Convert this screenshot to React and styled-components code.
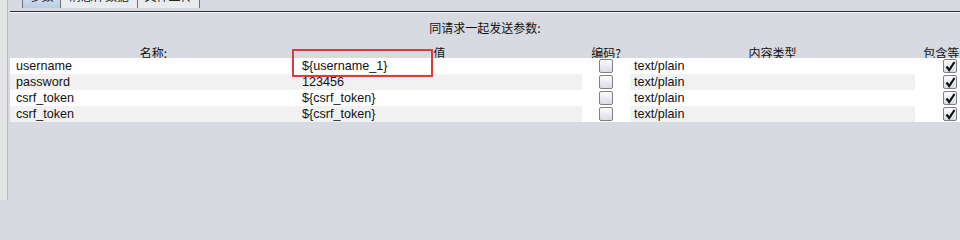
import React from 'react';
import styled, { createGlobalStyle } from 'styled-components';

const GlobalStyle = createGlobalStyle`
  html, body {
    margin: 0;
    padding: 0;
    background: #d7dae1;
  }
  body {
    font-family: "Liberation Sans", Arial, "Noto Sans CJK SC", sans-serif;
  }
`;

const Page = styled.div`
  position: relative;
  display: flex;
  width: 960px;
  height: 200px;
  overflow: hidden;
  background: #d7dae1;
`;

const SideStrip = styled.div`
  width: 7px;
  flex: none;
  background: #e2e3e5;
  border-right: 1px solid #b9bbbf;
  margin-right: 2px;
`;

const Main = styled.div`
  flex: 1;
  display: flex;
  flex-direction: column;
  min-width: 0;
  overflow: hidden;
`;

const TabBar = styled.div`
  height: 11px;
  display: flex;
  align-items: flex-end;
  padding-left: 12px;
  border-bottom: 1px solid #2b2d33;
  box-shadow: 0 1px 0 #f4f5f7;
  overflow: hidden;
`;

const Tab = styled.div`
  height: 20px;
  margin-bottom: 3px;
  width: ${({ w }) => w}px;
  box-sizing: border-box;
  border: 1px solid #6d7077;
  border-bottom: none;
  border-right: ${({ last }) => (last ? '1px solid #6d7077' : 'none')};
  background: ${({ active }) => (active ? 'linear-gradient(#e7eef6, #b9cde3)' : '#e9ebee')};
  font-family: "Noto Sans CJK SC", sans-serif;
  font-size: 12px;
  line-height: 14px;
  color: #222;
  text-align: center;
`;

const Title = styled.div`
  margin-top: 7px;
  height: 17px;
  text-align: center;
  font-family: "Noto Sans CJK SC", sans-serif;
  font-size: 12px;
  line-height: 17px;
  color: #111;
`;

const Grid = styled.div`
  display: grid;
  grid-template-columns: 287px 285px 48px 285px 70px;
  margin-top: 8px;
`;

const HeadCell = styled.div`
  height: 12px;
  padding-top: 2px;
  text-align: center;
  font-family: "Noto Sans CJK SC", sans-serif;
  font-size: 12px;
  line-height: 14px;
  color: #111;
  white-space: nowrap;
`;

const Body = styled.div`
  position: relative;
  display: grid;
  grid-template-columns: 287px 285px 48px 285px 70px;
  background: #fff;
`;

const TextCell = styled.div`
  height: 16px;
  padding-left: ${({ pad }) => pad}px;
  background: ${({ stripe }) => (stripe ? '#f1f1f1' : '#fff')};
  font-size: 12.6px;
  line-height: 16px;
  color: #111;
  white-space: nowrap;
`;

const BoxCell = styled.div`
  height: 16px;
  display: flex;
  align-items: center;
  justify-content: ${({ align }) => align || 'center'};
  padding-left: ${({ pad }) => pad || 0}px;
  background: #fff;
`;

const Check = styled.div`
  width: 14px;
  height: 14px;
  box-sizing: border-box;
  border: 1px solid #7b7f86;
  border-radius: 2px;
  background: linear-gradient(#fbfbfb, #d9dce1);
  display: flex;
  align-items: center;
  justify-content: center;
`;

const Highlight = styled.div`
  position: absolute;
  left: 292px;
  top: 49px;
  width: 141px;
  height: 28px;
  box-sizing: border-box;
  border: 2px solid #e0393b;
  pointer-events: none;
`;

const rows = [
  ['username', '${username_1}'],
  ['password', '123456'],
  ['csrf_token', '${csrf_token}'],
  ['csrf_token', '${csrf_token}'],
];

function Tick() {
  return (
    <svg width="11" height="11" viewBox="0 0 11 11">
      <path d="M1.5 5.5 L4.2 9 L9.5 1" fill="none" stroke="#111" strokeWidth="2.2" />
    </svg>
  );
}

export default function App() {
  return (
    <Page>
      <GlobalStyle />
      <SideStrip />
      <Main>
        <TabBar>
          <Tab w={38} active>参数</Tab>
          <Tab w={77}>消息体数据</Tab>
          <Tab w={63} last>文件上传</Tab>
        </TabBar>
        <Title>同请求一起发送参数:</Title>
        <Grid>
          <HeadCell>名称:</HeadCell>
          <HeadCell>值</HeadCell>
          <HeadCell>编码?</HeadCell>
          <HeadCell>内容类型</HeadCell>
          <HeadCell>包含等于?</HeadCell>
        </Grid>
        <Body>
          {rows.map(([name, value], i) => (
            <React.Fragment key={i}>
              <TextCell pad={6} stripe={i % 2 === 1}>{name}</TextCell>
              <TextCell pad={5} stripe={i % 2 === 1}>{value}</TextCell>
              <BoxCell><Check /></BoxCell>
              <TextCell pad={4} stripe={i % 2 === 1}>text/plain</TextCell>
              <BoxCell align="flex-start" pad={28}><Check><Tick /></Check></BoxCell>
            </React.Fragment>
          ))}
        </Body>
      </Main>
      <Highlight />
    </Page>
  );
}
